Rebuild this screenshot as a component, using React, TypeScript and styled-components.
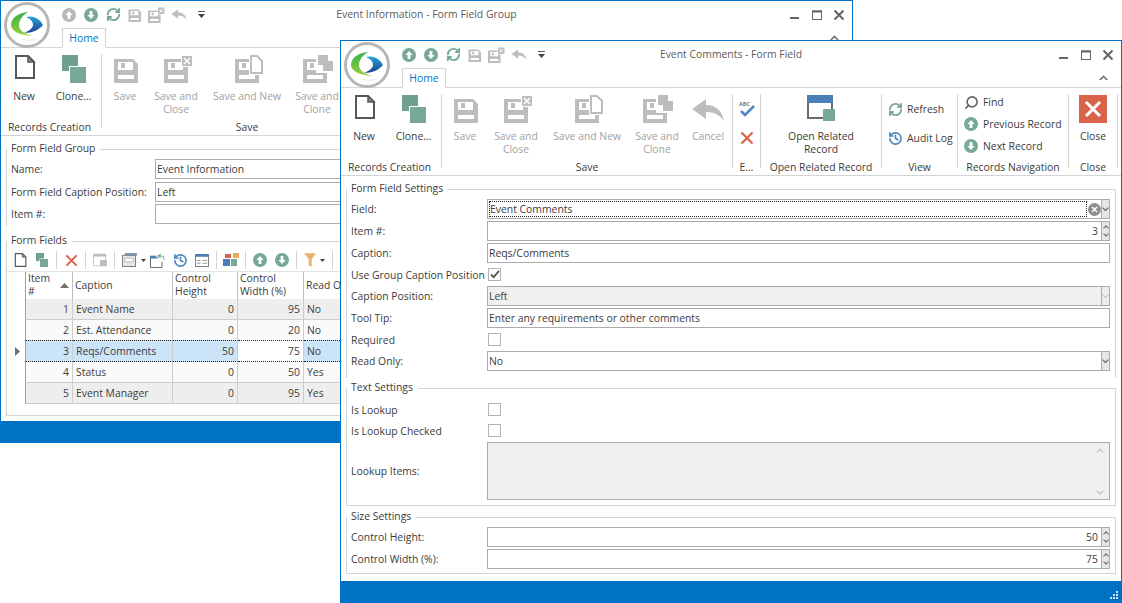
import React from "react";
import styled, {createGlobalStyle} from "styled-components";
import {History, RefreshCw, Search} from "lucide-react";

const blue = "#0072c6";
const teal = "#78a898";
const gray = "#bdbdbd";
const line = "#d4d4d4";
const inputLine = "#ababab";

const GlobalStyle = createGlobalStyle`
  html, body {
    margin: 0;
    padding: 0;
    background: #fff;
  }
  body {
    width: 1122px;
    height: 603px;
    overflow: hidden;
    position: relative;
    font-family: "Open Sans", "Liberation Sans", sans-serif;
    font-size: 10.4px;
    color: #3c3c3c;
  }
  * {
    box-sizing: border-box;
  }
`;

const Win = styled.section<{ $left: number; $top: number; $width: number; $height: number }>`
  position: absolute;
  left: ${({$left}) => $left}px;
  top: ${({$top}) => $top}px;
  width: ${({$width}) => $width}px;
  height: ${({$height}) => $height}px;
  border: 1px solid ${blue};
  background: #fff;
  display: flex;
  flex-direction: column;
  overflow: hidden;
`;

const Head = styled.header`
  height: 47px;
  flex: none;
  border-bottom: 1px solid ${line};
`;

const TopRow = styled.div`
  height: 27px;
  display: grid;
  grid-template-columns: 1fr auto 1fr;
  align-items: center;
`;

const QuickBar = styled.div`
  display: flex;
  align-items: center;
  height: 27px;
  padding-left: 3px;
`;

const LogoSlot = styled.div`
  width: 54px;
  height: 27px;
  flex: none;
  padding-top: 1px;
`;

const QuickButton = styled.span`
  width: 22px;
  height: 26px;
  display: flex;
  align-items: center;
  justify-content: center;
  flex: none;
`;

const Title = styled.h1`
  margin: 0 0 1px;
  font-size: 10.4px;
  line-height: 16px;
  font-weight: 400;
  color: #5a5a5a;
  white-space: nowrap;
`;

const Controls = styled.div`
  display: flex;
  justify-content: flex-end;
  padding-right: 2px;
`;

const TabRow = styled.div`
  height: 19px;
  padding: 0 13px 0 61px;
  display: flex;
  justify-content: space-between;
  align-items: center;
`;

const Tab = styled.div`
  width: 44px;
  height: 20px;
  margin-top: 1px;
  border: 1px solid ${line};
  border-bottom: 1px solid #fff;
  background: #fff;
  color: ${blue};
  line-height: 19px;
  text-align: center;
  position: relative;
`;

const Ribbon = styled.div`
  height: 88px;
  flex: none;
  padding-left: 1px;
  border-bottom: 1px solid ${line};
  display: flex;
  align-items: flex-start;
`;

const Group = styled.div<{ $width: number }>`
  width: ${({$width}) => $width}px;
  height: 87px;
  flex: none;
  display: flex;
  flex-direction: column;
`;

const GroupBody = styled.div`
  height: 72px;
  display: flex;
`;

const GroupLabel = styled.div<{ $nudge?: number }>`
  height: 14px;
  padding-right: ${({$nudge}) => $nudge ?? 0}px;
  line-height: 14px;
  text-align: center;
  white-space: nowrap;
  overflow: hidden;
`;

const RibbonSep = styled.div`
  width: 1px;
  height: 74px;
  margin-top: 6px;
  flex: none;
  background: ${line};
`;

const LargeButton = styled.div<{ $width: number; $off?: boolean }>`
  width: ${({$width}) => $width}px;
  flex: none;
  display: flex;
  flex-direction: column;
  align-items: center;
  color: ${({$off}) => $off ? "#a2a2a2" : "#3c3c3c"};
  line-height: 13px;
  text-align: center;
`;

const IconSlot = styled.div`
  height: 42px;
  padding-top: 7px;
  flex: none;
  display: flex;
  justify-content: center;
`;

const SmallStack = styled.div<{ $top: number; $gap: number; $center?: boolean }>`
  width: 100%;
  padding-top: ${({$top}) => $top}px;
  display: flex;
  flex-direction: column;
  gap: ${({$gap}) => $gap}px;
  align-items: ${({$center}) => $center ? "center" : "stretch"};
`;

const SmallButton = styled.div<{ $pad: number }>`
  height: 22px;
  padding-left: ${({$pad}) => $pad}px;
  display: flex;
  align-items: center;
  gap: 4px;
  line-height: 20px;
  white-space: nowrap;
`;

const SmallIcon = styled.span`
  width: 16px;
  height: 22px;
  flex: none;
  display: flex;
  align-items: center;
  justify-content: center;
`;

const FlipSearch = styled(Search)`
  transform: scaleX(-1);
`;

const Form = styled.div`
  flex: 1;
  min-height: 0;
  padding: 5px 5px 0;
`;

const Box = styled.fieldset<{ $pad: string; $open?: boolean; $after: number }>`
  margin: 0 0 ${({$after}) => $after}px;
  min-width: 0;
  padding: ${({$pad}) => $pad};
  border: 1px solid ${line};
  border-bottom: ${({$open}) => $open ? "0" : `1px solid ${line}`};
`;

const BoxTitle = styled.legend<{ $inset?: number }>`
  margin-left: ${({$inset}) => -($inset ?? 0)}px;
  padding: 0 5px 0 4px;
  line-height: 15px;
  height: 16px;
  color: #3c3c3c;
`;

const Row = styled.div<{ $label: number; $after?: number; $height?: number; $before?: number }>`
  display: grid;
  grid-template-columns: ${({$label}) => $label}px 1fr;
  align-items: center;
  height: ${({$height}) => $height ?? 20}px;
  margin-top: ${({$before}) => $before ?? 0}px;
  margin-bottom: ${({$after}) => $after ?? 2}px;
  line-height: 18px;
  white-space: nowrap;
`;

const Field = styled.div<{ $off?: boolean; $right?: boolean }>`
  height: 100%;
  min-width: 0;
  border: 1px solid ${inputLine};
  background: ${({$off}) => $off ? "#f0f0f0" : "#fff"};
  display: flex;
  align-items: stretch;
  line-height: 18px;
`;

const FieldText = styled.div<{ $right?: boolean }>`
  flex: 1;
  padding: 0 3px 0 1px;
  text-align: ${({$right}) => $right ? "right" : "left"};
  color: #3c3c3c;
`;

const FocusText = styled.div`
  flex: 1;
  margin: 1px 0 1px 1px;
  border: 1px dotted #222;
  line-height: 14px;
  padding-left: 0;
`;

const ClearSlot = styled.span`
  width: 14px;
  flex: none;
  display: flex;
  align-items: center;
  justify-content: center;
`;

const SideButton = styled.div<{ $off?: boolean }>`
  width: 8px;
  flex: none;
  background: ${({$off}) => $off ? "#ededed" : "#e6e6e6"};
  border-left: 1px solid ${inputLine};
  display: flex;
  flex-direction: column;
  align-items: center;
  justify-content: space-evenly;
`;

const CheckBox = styled.span`
  width: 13px;
  height: 13px;
  border: 1px solid #b4b4b4;
  margin-left: 1px;
  display: flex;
  align-items: center;
  justify-content: center;
  background: #fff;
`;

const MemoField = styled(Field)`
  justify-content: flex-end;
`;

const MemoScroll = styled.div`
  width: 18px;
  padding: 5px 0 4px;
  display: flex;
  flex-direction: column;
  align-items: center;
  justify-content: space-between;
`;

const ToolStrip = styled.div`
  height: 22px;
  padding-left: 2px;
  display: flex;
  align-items: center;
`;

const ToolButton = styled.span<{ $wide?: boolean }>`
  width: ${({$wide}) => $wide ? 29 : 22}px;
  height: 22px;
  flex: none;
  display: flex;
  align-items: center;
  justify-content: ${({$wide}) => $wide ? "flex-start" : "center"};
  padding-left: ${({$wide}) => $wide ? 4 : 0}px;
  gap: 3px;
`;

const ToolSep = styled.span`
  width: 1px;
  height: 18px;
  margin: 0 3px;
  flex: none;
  background: ${line};
`;

const GridWrap = styled.div`
  border-top: 1px solid #e2e2e2;
  margin-bottom: 11px;
`;

const GridRow = styled.div`
  display: grid;
  grid-template-columns: 18px 48px 100px 65px 66px 120px;
`;

const GridHeader = styled(GridRow)`
  height: 27px;
`;

const HeadCell = styled.div<{ $first?: boolean }>`
  border-right: 1px solid #bdbdbd;
  border-bottom: 1px solid #9f9f9f;
  border-left: ${({$first}) => $first ? "1px solid #9f9f9f" : "0"};
  padding: 0 3px 2px 2px;
  line-height: 13px;
  display: flex;
  align-items: center;
  justify-content: space-between;
  white-space: pre-line;
`;

const Indicator = styled.div`
  display: flex;
  align-items: center;
  justify-content: center;
  padding-left: 2px;
`;

const Cell = styled.div<{ $bg: string; $right?: boolean; $first?: boolean; $current?: boolean; $focus?: boolean }>`
  background: ${({$bg, $focus}) => $focus ? "#fff" : $bg};
  border-right: 1px solid #cdcdcd;
  border-left: ${({$first}) => $first ? "1px solid #9f9f9f" : "0"};
  border-bottom: ${({$current}) => $current ? "1px dotted #222" : "1px solid #cdcdcd"};
  border-top: ${({$current}) => $current ? "1px dotted #222" : "0"};
  margin-top: ${({$current}) => $current ? "-1px" : "0"};
  height: ${({$current}) => $current ? 22 : 21}px;
  padding: 0 3px;
  line-height: 20px;
  text-align: ${({$right}) => $right ? "right" : "left"};
  white-space: nowrap;
  overflow: hidden;
`;

const StatusBar = styled.footer`
  height: 21px;
  flex: none;
  background: ${blue};
  display: flex;
  justify-content: flex-end;
  align-items: flex-end;
  padding: 0 2px 2px 0;
`;

const Page = styled.main`
  width: 1122px;
  height: 603px;
`;

const Arrow: React.FC<{ down?: boolean; color?: string; size?: number }> = ({down, color = teal, size = 14}) => (
  <svg width={size} height={size} viewBox="0 0 14 14">
    <circle cx="7" cy="7" r="7" fill={color}/>
    <path d={down ? "M5.6 3h2.8v4h2.2L7 11 3.4 7h2.2z" : "M5.6 11h2.8V7h2.2L7 3 3.4 7h2.2z"} fill="#fff"/>
  </svg>
);

const Logo: React.FC = () => (
  <svg width="46" height="46" viewBox="0 0 46 46">
    <defs>
      <linearGradient id="eye" x1="0" y1="0" x2="0" y2="1">
        <stop offset="0" stopColor="#2aa6d8"/>
        <stop offset="1" stopColor="#1b3f92"/>
      </linearGradient>
      <linearGradient id="moon" x1="0" y1="0" x2="0" y2="1">
        <stop offset="0" stopColor="#2fb04a"/>
        <stop offset="1" stopColor="#9ed23a"/>
      </linearGradient>
    </defs>
    <circle cx="23" cy="23" r="21.5" fill="#fff" stroke="#b6b6b6" strokeWidth="3"/>
    <path d="M24 10C14 11 7 16 7 23c0 6 8 10 22 11-8-2-14-5-14-11 0-5 4-10 9-13z" fill="url(#moon)"/>
    <path d="M22 15c8-2 14 2 17 8-4 5-11 8-19 8 5-2 9-5 9-8 0-4-3-6-7-8z" fill="url(#eye)"/>
    <path d="M17 37c5 2 12 2 17 0-5 1-11 1-17 0z" fill="#dfe9c8"/>
  </svg>
);

const floppy = "M0 0h19l5 5v19H0zM4 3v8h15V3zM4 16v4h16v-4z";

const Floppy: React.FC<{ x: number; y: number; scale?: number; color?: string }> = ({x, y, scale = 1, color = gray}) => (
  <g transform={`translate(${x} ${y}) scale(${scale})`} fill={color}>
    <path d={floppy} fillRule="evenodd"/>
    <rect x="7" y="4" width="4" height="5"/>
  </g>
);

const Canvas: React.FC<{ children: React.ReactNode }> = ({children}) => (
  <svg width="34" height="28" viewBox="0 0 34 28">{children}</svg>
);

const NewIcon: React.FC<{ size?: number }> = ({size = 24}) => (
  <svg width={size} height={size} viewBox="0 0 24 24">
    <path d="M4 1h12l6 6v16H4z" fill="#fff" stroke="#585858" strokeWidth="2"/>
    <path d="M16 1v6h6z" fill="#8a8a8a" stroke="#585858" strokeWidth="1.5"/>
  </svg>
);

const CloneIcon: React.FC<{ size?: number }> = ({size = 28}) => (
  <svg width={size} height={size} viewBox="0 0 24 28">
    <rect x="0" y="0" width="16" height="16" fill="#6f9f8f"/>
    <rect x="7" y="11" width="17" height="17" fill="#fff"/>
    <rect x="8" y="12" width="16" height="16" fill={teal}/>
  </svg>
);

const SaveIcon = () => <Canvas><Floppy x={6} y={4}/></Canvas>;

const SaveCloseIcon = () => (
  <Canvas>
    <Floppy x={5} y={4}/>
    <rect x="22" y="0" width="12" height="12" fill="#fff"/>
    <rect x="23" y="1" width="10" height="10" fill={gray}/>
    <path d="M25 3l6 6M31 3l-6 6" stroke="#fff" strokeWidth="1.6"/>
  </Canvas>
);

const SaveNewIcon = () => (
  <Canvas>
    <Floppy x={5} y={4}/>
    <path d="M19 0h10l5 5v15H19z" fill="#fff"/>
    <path d="M21 1h6l5 5v12H21z" fill="#fff" stroke={gray} strokeWidth="2"/>
  </Canvas>
);

const SaveCloneIcon = () => (
  <Canvas>
    <Floppy x={3} y={4}/>
    <rect x="16" y="0" width="18" height="18" fill="#fff"/>
    <rect x="18" y="0" width="10" height="10" fill={gray}/>
    <rect x="23" y="6" width="10" height="10" fill={gray}/>
  </Canvas>
);

const CancelIcon = () => (
  <Canvas>
    <path d="M1 14 15 4v6c10 0 16 6 18 16-4-6-10-9-18-9v7z" fill={gray}/>
  </Canvas>
);

const SmallFloppy: React.FC<{ close?: boolean }> = ({close}) => (
  <svg width="18" height="16" viewBox="0 0 36 32">
    <Floppy x={close ? 0 : 5} y={close ? 7 : 5} scale={1.05}/>
    {close && <rect x="19" y="0" width="15" height="15" fill="#fff"/>}
    {close && <rect x="20" y="1" width="13" height="13" fill={gray}/>}
    {close && <path d="M23 4l7 7M30 4l-7 7" stroke="#fff" strokeWidth="2"/>}
  </svg>
);

const UndoSmall = () => (
  <svg width="16" height="13" viewBox="0 0 34 26">
    <path d="M1 12 15 2v6c10 0 16 6 18 16-4-6-10-9-18-9v7z" fill={gray}/>
  </svg>
);

const Caret: React.FC<{ bar?: boolean }> = ({bar}) => (
  <svg width="7" height="8" viewBox="0 0 7 8">
    {bar && <rect x="0" y="0" width="7" height="1" fill="#555"/>}
    <path d={bar ? "M0 3h7L3.500 7z" : "M1 3h5L3.500 6z"} fill="#444"/>
  </svg>
);

const MinIcon = () => (
  <svg width="12" height="12" viewBox="0 0 12 12"><rect x="1" y="8" width="9" height="2" fill="#666"/></svg>
);

const MaxIcon = () => (
  <svg width="12" height="12" viewBox="0 0 12 12">
    <rect x="1.500" y="2" width="9" height="8.500" fill="none" stroke="#666"/>
    <rect x="1" y="1.500" width="10" height="2" fill="#666"/>
  </svg>
);

const CloseIcon = () => (
  <svg width="12" height="12" viewBox="0 0 12 12">
    <path d="M1.500 1.500l9 9M10.500 1.500l-9 9" stroke="#666" strokeWidth="2"/>
  </svg>
);

const ChevronMark: React.FC<{ up?: boolean; color?: string; w?: number }> = ({up, color = "#707070", w = 8}) => (
  <svg width={w} height={w * 0.65} viewBox="0 0 8 5.200">
    <path d={up ? "M.7 4.500 4 1.200l3.300 3.300" : "M.7.700 4 4l3.300-3.300"} fill="none" stroke={color} strokeWidth="1.500"/>
  </svg>
);

const SpellIcon = () => (
  <svg width="18" height="18" viewBox="0 0 18 18">
    <text x="1" y="6" fontSize="5.500" fontWeight="700" fontFamily="Open Sans, sans-serif" fill="#777">ABC</text>
    <path d="M3 11l4 4 9-9" fill="none" stroke="#4a86c0" strokeWidth="2.500"/>
  </svg>
);

const RedCross: React.FC<{ size?: number }> = ({size = 14}) => (
  <svg width={size} height={size} viewBox="0 0 14 14">
    <path d="M1.500 1.500l11 11M12.500 1.500l-11 11" stroke="#d9644a" strokeWidth="2.200"/>
  </svg>
);

const RelatedIcon = () => (
  <svg width="28" height="26" viewBox="0 0 28 26">
    <rect x="0" y="0" width="26" height="8" fill="#4a7fb8"/>
    <path d="M1 8v15h15M25 8v6" fill="none" stroke="#6a6a6a" strokeWidth="2"/>
    <rect x="16" y="14" width="12" height="12" fill={teal}/>
  </svg>
);

const BigClose = () => (
  <svg width="28" height="28" viewBox="0 0 28 28">
    <rect width="28" height="28" fill="#d9644a"/>
    <path d="M7 7l14 14M21 7 7 21" stroke="#fff" strokeWidth="3"/>
  </svg>
);

const ClearIcon = () => (
  <svg width="13" height="13" viewBox="0 0 13 13">
    <circle cx="6.500" cy="6.500" r="6.500" fill="#8e8e8e"/>
    <path d="M4 4l5 5M9 4 4 9" stroke="#fff" strokeWidth="1.500"/>
  </svg>
);

const CheckMark = () => (
  <svg width="10" height="9" viewBox="0 0 11 10">
    <path d="M1 5l3 3 6-7" fill="none" stroke="#555" strokeWidth="2"/>
  </svg>
);

const MiniWindow = () => (
  <svg width="14" height="14" viewBox="0 0 16 16">
    <path d="M.5 1.500h14v13H.5z" fill="#fff" stroke={gray}/>
    <rect x="0" y="1" width="15" height="3" fill={gray}/>
    <rect x="8" y="8" width="8" height="7" fill={gray}/>
  </svg>
);

const FormWindow = () => (
  <svg width="15" height="14" viewBox="0 0 16 15">
    <rect x="3" y="0" width="13" height="3" fill="#7a9cc0"/>
    <rect x=".5" y="2.500" width="14" height="12" fill="#e6e6e6" stroke="#777"/>
    <rect x="3" y="5.500" width="9" height="4" fill="#fff" stroke="#999" strokeWidth=".6"/>
  </svg>
);

const ExportIcon = () => (
  <svg width="16" height="15" viewBox="0 0 18 17">
    <path d="M.5 5.500h9M13.500 10v6.500H.5v-11" fill="none" stroke="#555"/>
    <rect x="0" y="3" width="7" height="3" fill="#4a7fb8"/>
    <path d="M15 9V4h-4V1.500L6.800 4.500 11 7V5h3v4z" fill={teal} transform="translate(1 -1)"/>
  </svg>
);

const LayoutIcon = () => (
  <svg width="14" height="13" viewBox="0 0 15 14">
    <rect x=".5" y=".5" width="14" height="13" fill="#fff" stroke="#777"/>
    <rect x="0" y="0" width="15" height="3" fill="#4a7fb8"/>
    <path d="M2 7h4M8 7h5M2 10h4M8 10h5" stroke="#999" strokeWidth="1.200"/>
  </svg>
);

const BlocksIcon = () => (
  <svg width="16" height="14" viewBox="0 0 16 14">
    <rect x="2" y="1" width="6" height="4" fill="#d9644a"/>
    <rect x="10" y="0" width="6" height="5" fill="#e8a860"/>
    <rect x="0" y="6" width="7" height="7" fill="#4a7fb8"/>
    <rect x="8" y="6" width="6" height="7" fill={teal}/>
  </svg>
);

const FunnelIcon = () => (
  <svg width="12" height="14" viewBox="0 0 14 16">
    <path d="M0 0h14L9 7v9L5.500 14V7z" fill="#eab26a"/>
  </svg>
);

const QuickAccess: React.FC<{ firstActive?: boolean }> = ({firstActive}) => (
  <QuickBar>
    <LogoSlot><Logo/></LogoSlot>
    <QuickButton><Arrow color={firstActive ? teal : "#b9b9b9"}/></QuickButton>
    <QuickButton><Arrow down/></QuickButton>
    <QuickButton><RefreshCw size={15} strokeWidth={3} color={teal}/></QuickButton>
    <QuickButton><SmallFloppy/></QuickButton>
    <QuickButton><SmallFloppy close/></QuickButton>
    <QuickButton><UndoSmall/></QuickButton>
    <QuickButton><Caret bar/></QuickButton>
  </QuickBar>
);

const WindowHead: React.FC<{ title: string; firstActive?: boolean }> = ({title, firstActive}) => (
  <Head>
    <TopRow>
      <QuickAccess firstActive={firstActive}/>
      <Title>{title}</Title>
      <Controls>
        <QuickButton><MinIcon/></QuickButton>
        <QuickButton><MaxIcon/></QuickButton>
        <QuickButton><CloseIcon/></QuickButton>
      </Controls>
    </TopRow>
    <TabRow>
      <Tab>Home</Tab>
      <ChevronMark up color="#777" w={9}/>
    </TabRow>
  </Head>
);

const Big: React.FC<{ width: number; off?: boolean; icon: React.ReactNode; label: React.ReactNode }> = ({width, off, icon, label}) => (
  <LargeButton $width={width} $off={off}>
    <IconSlot>{icon}</IconSlot>
    <span>{label}</span>
  </LargeButton>
);

const CreationGroup = () => (
  <Group $width={99}>
    <GroupBody>
      <Big width={44} icon={<NewIcon/>} label="New"/>
      <Big width={55} icon={<CloneIcon/>} label="Clone…"/>
    </GroupBody>
    <GroupLabel $nudge={4}>Records Creation</GroupLabel>
  </Group>
);

const SaveGroup: React.FC<{ cancel?: boolean }> = ({cancel}) => (
  <Group $width={290}>
    <GroupBody>
      <Big width={46} off icon={<SaveIcon/>} label="Save"/>
      <Big width={56} off icon={<SaveCloseIcon/>} label={<>Save and<br/>Close</>}/>
      <Big width={86} off icon={<SaveNewIcon/>} label="Save and New"/>
      <Big width={54} off icon={<SaveCloneIcon/>} label={<>Save and<br/>Clone</>}/>
      {cancel && <Big width={48} off icon={<CancelIcon/>} label="Cancel"/>}
    </GroupBody>
    <GroupLabel>Save</GroupLabel>
  </Group>
);

const FrontRibbon = () => (
  <Ribbon>
    <CreationGroup/>
    <RibbonSep/>
    <SaveGroup cancel/>
    <RibbonSep/>
    <Group $width={27}>
      <GroupBody>
        <SmallStack $top={10} $gap={7} $center>
          <SmallButton $pad={0}><SpellIcon/></SmallButton>
          <SmallButton $pad={0}><RedCross/></SmallButton>
        </SmallStack>
      </GroupBody>
      <GroupLabel>E…</GroupLabel>
    </Group>
    <RibbonSep/>
    <Group $width={120}>
      <GroupBody>
        <LargeButton $width={120}>
          <IconSlot><RelatedIcon/></IconSlot>
          <span>Open Related<br/>Record</span>
        </LargeButton>
      </GroupBody>
      <GroupLabel>Open Related Record</GroupLabel>
    </Group>
    <RibbonSep/>
    <Group $width={75}>
      <GroupBody>
        <SmallStack $top={10} $gap={7}>
          <SmallButton $pad={5}><SmallIcon><RefreshCw size={15} strokeWidth={3} color={teal}/></SmallIcon>Refresh</SmallButton>
          <SmallButton $pad={5}><SmallIcon><History size={15} strokeWidth={2.6} color="#4a86c0"/></SmallIcon>Audit Log</SmallButton>
        </SmallStack>
      </GroupBody>
      <GroupLabel>View</GroupLabel>
    </Group>
    <RibbonSep/>
    <Group $width={110}>
      <GroupBody>
        <SmallStack $top={3} $gap={0}>
          <SmallButton $pad={5}><SmallIcon><FlipSearch size={15} strokeWidth={2.6} color="#666"/></SmallIcon>Find</SmallButton>
          <SmallButton $pad={5}><SmallIcon><Arrow/></SmallIcon>Previous Record</SmallButton>
          <SmallButton $pad={5}><SmallIcon><Arrow down/></SmallIcon>Next Record</SmallButton>
        </SmallStack>
      </GroupBody>
      <GroupLabel>Records Navigation</GroupLabel>
    </Group>
    <RibbonSep/>
    <Group $width={48}>
      <GroupBody>
        <Big width={48} icon={<BigClose/>} label="Close"/>
      </GroupBody>
      <GroupLabel>Close</GroupLabel>
    </Group>
    <RibbonSep/>
  </Ribbon>
);

const BackRibbon = () => (
  <Ribbon>
    <CreationGroup/>
    <RibbonSep/>
    <SaveGroup/>
  </Ribbon>
);

const Side: React.FC<{ off?: boolean }> = ({off}) => (
  <SideButton $off={off}>
    <ChevronMark w={7} color={off ? "#c8c8c8" : "#707070"}/>
  </SideButton>
);

const Spin = () => (
  <SideButton>
    <ChevronMark up w={6}/>
    <ChevronMark w={6}/>
  </SideButton>
);

const columns = ["Caption", "Control\nHeight", "Control\nWidth (%)", "Read Only"];

const gridRows = [
  {item: 1, caption: "Event Name", height: 0, width: 95, readOnly: "No", bg: "#eeeeee"},
  {item: 2, caption: "Est. Attendance", height: 0, width: 20, readOnly: "No", bg: "#fafafa"},
  {item: 3, caption: "Reqs/Comments", height: 50, width: 75, readOnly: "No", bg: "#cce4f7", current: true},
  {item: 4, caption: "Status", height: 0, width: 50, readOnly: "Yes", bg: "#fafafa"},
  {item: 5, caption: "Event Manager", height: 0, width: 95, readOnly: "Yes", bg: "#eeeeee"},
];

const FieldsGrid = () => (
  <GridWrap>
    <GridHeader>
      <div/>
      <HeadCell $first>
        {"Item\n#"}
        <svg width="9" height="5" viewBox="0 0 9 5"><path d="M0 5h9L4.500 0z" fill="#707070"/></svg>
      </HeadCell>
      {columns.map(c => <HeadCell key={c}>{c}</HeadCell>)}
    </GridHeader>
    {gridRows.map(r => (
      <GridRow key={r.item}>
        <Indicator>
          {r.current && <svg width="5" height="9" viewBox="0 0 5 9"><path d="M0 0l5 4.500L0 9z" fill="#707070"/></svg>}
        </Indicator>
        <Cell $bg={r.bg} $right $first $current={r.current}>{r.item}</Cell>
        <Cell $bg={r.bg} $current={r.current}>{r.caption}</Cell>
        <Cell $bg={r.bg} $right $current={r.current}>{r.height}</Cell>
        <Cell $bg={r.bg} $right $current={r.current} $focus={r.current}>{r.width}</Cell>
        <Cell $bg={r.bg} $current={r.current}>{r.readOnly}</Cell>
      </GridRow>
    ))}
  </GridWrap>
);

const BackWindow = () => (
  <Win $left={0} $top={0} $width={853} $height={443}>
    <WindowHead title="Event Information - Form Field Group"/>
    <BackRibbon/>
    <Form>
      <Box $pad="2px 5px 0 4px" $open $after={7}>
        <BoxTitle $inset={4}>Form Field Group</BoxTitle>
        <Row $label={144} $after={3}>Name:<Field><FieldText>Event Information</FieldText></Field></Row>
        <Row $label={144}>Form Field Caption Position:<Field><FieldText>Left</FieldText></Field></Row>
        <Row $label={144}>Item #:<Field/></Row>
      </Box>
      <Box $pad="0" $after={0}>
        <BoxTitle>Form Fields</BoxTitle>
        <ToolStrip>
          <ToolButton><NewIcon size={14}/></ToolButton>
          <ToolButton><CloneIcon size={14}/></ToolButton>
          <ToolSep/>
          <ToolButton><RedCross size={13}/></ToolButton>
          <ToolSep/>
          <ToolButton><MiniWindow/></ToolButton>
          <ToolSep/>
          <ToolButton $wide><FormWindow/><Caret/></ToolButton>
          <ToolButton><ExportIcon/></ToolButton>
          <ToolButton><History size={15} strokeWidth={2.6} color="#4a86c0"/></ToolButton>
          <ToolButton><LayoutIcon/></ToolButton>
          <ToolSep/>
          <ToolButton><BlocksIcon/></ToolButton>
          <ToolSep/>
          <ToolButton><Arrow/></ToolButton>
          <ToolButton><Arrow down/></ToolButton>
          <ToolSep/>
          <ToolButton $wide><FunnelIcon/><Caret/></ToolButton>
          <ToolSep/>
        </ToolStrip>
        <FieldsGrid/>
      </Box>
    </Form>
    <StatusBar/>
  </Win>
);

const FrontWindow = () => (
  <Win $left={340} $top={40} $width={782} $height={563}>
    <WindowHead title="Event Comments - Form Field" firstActive/>
    <FrontRibbon/>
    <Form>
      <Box $pad="2px 5px 7px 4px" $open $after={2}>
        <BoxTitle $inset={4}>Form Field Settings</BoxTitle>
        <Row $label={136}>
          Field:
          <Field>
            <FocusText>Event Comments</FocusText>
            <ClearSlot><ClearIcon/></ClearSlot>
            <Side/>
          </Field>
        </Row>
        <Row $label={136}>Item #:<Field><FieldText $right>3</FieldText><Spin/></Field></Row>
        <Row $label={136}>Caption:<Field><FieldText>Reqs/Comments</FieldText></Field></Row>
        <Row $label={136} $height={19}>Use Group Caption Position<CheckBox><CheckMark/></CheckBox></Row>
        <Row $label={136}>Caption Position:<Field $off><FieldText>Left</FieldText><Side off/></Field></Row>
        <Row $label={136}>Tool Tip:<Field><FieldText>Enter any requirements or other comments</FieldText></Field></Row>
        <Row $label={136} $height={19}>Required<CheckBox/></Row>
        <Row $label={136} $after={0}>Read Only:<Field><FieldText>No</FieldText><Side/></Field></Row>
      </Box>
      <Box $pad="2px 5px 5px 4px" $after={3}>
        <BoxTitle $inset={4}>Text Settings</BoxTitle>
        <Row $label={136} $height={19} $before={2}>Is Lookup<CheckBox/></Row>
        <Row $label={136} $height={19}>Is Lookup Checked<CheckBox/></Row>
        <Row $label={136} $height={58} $after={0}>
          Lookup Items:
          <MemoField $off>
            <MemoScroll>
              <ChevronMark up color="#c8c8c8"/>
              <ChevronMark color="#c8c8c8"/>
            </MemoScroll>
          </MemoField>
        </Row>
      </Box>
      <Box $pad="2px 5px 4px 4px" $after={0}>
        <BoxTitle $inset={4}>Size Settings</BoxTitle>
        <Row $label={136}>Control Height:<Field><FieldText $right>50</FieldText><Spin/></Field></Row>
        <Row $label={136} $after={0}>Control Width (%):<Field><FieldText $right>75</FieldText><Spin/></Field></Row>
      </Box>
    </Form>
    <StatusBar>
      <svg width="9" height="9" viewBox="0 0 9 9" fill="#cfe3f4">
        <rect x="6" y="0" width="2" height="2"/>
        <rect x="3" y="3" width="2" height="2"/>
        <rect x="6" y="3" width="2" height="2"/>
        <rect x="0" y="6" width="2" height="2"/>
        <rect x="3" y="6" width="2" height="2"/>
        <rect x="6" y="6" width="2" height="2"/>
      </svg>
    </StatusBar>
  </Win>
);

const App: React.FC = () => (
  <Page>
    <GlobalStyle/>
    <BackWindow/>
    <FrontWindow/>
  </Page>
);

export default App;
